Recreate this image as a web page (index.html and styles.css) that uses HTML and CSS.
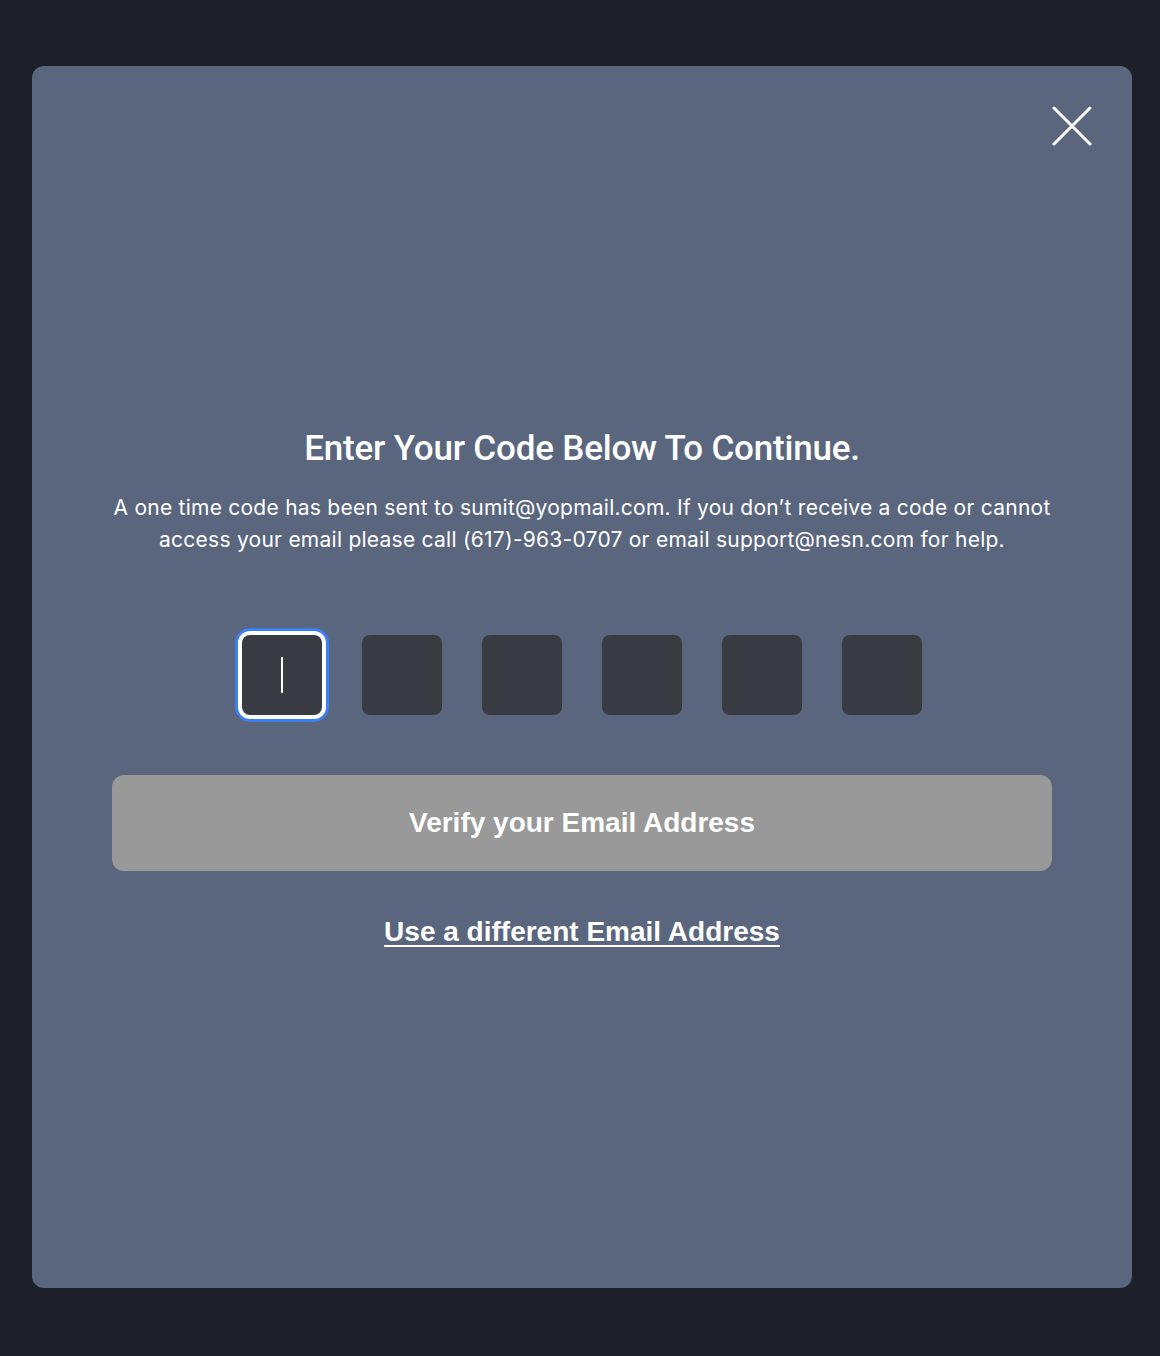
FILE: index.html
```html
<!DOCTYPE html>
<html lang="en">
<head>
<meta charset="utf-8">
<title>Verify Email</title>
<link rel="stylesheet" href="styles.css">
</head>
<body>
<div class="overlay">
  <div class="modal">
    <button class="close" aria-label="Close">
      <svg width="40" height="40" viewBox="0 0 40 40"><path d="M2 2 L38 38 M38 2 L2 38" stroke="#fff" stroke-width="3" stroke-linecap="round" fill="none"/></svg>
    </button>
    <div class="content">
      <h1 class="title">Enter Your Code Below To Continue.</h1>
      <p class="desc">A one time code has been sent to sumit@yopmail.com. If you don’t receive a code or cannot access your email please call (617)-963-0707 or email support@nesn.com for help.</p>
      <div class="codes">
        <div class="code focused"><span class="caret"></span></div>
        <div class="code"></div>
        <div class="code"></div>
        <div class="code"></div>
        <div class="code"></div>
        <div class="code"></div>
      </div>
      <button class="verify">Verify your Email Address</button>
      <a class="different" href="#">Use a different Email Address</a>
    </div>
  </div>
</div>
</body>
</html>
```

FILE: styles.css
```css
html, body {
  margin: 0;
  padding: 0;
  background: #1e2029;
}
.overlay {
  width: 1160px;
  height: 1356px;
  padding: 66px 28px 68px 32px;
  box-sizing: border-box;
}
.modal {
  position: relative;
  width: 1100px;
  height: 1222px;
  background: #5a667d;
  border-radius: 12px;
  box-sizing: border-box;
  padding: 0 80px;
}
.close {
  position: absolute;
  top: 40px;
  right: 40px;
  width: 40px;
  height: 40px;
  padding: 0;
  border: 0;
  background: none;
  cursor: pointer;
}
.close svg { display: block; }
.content {
  display: flex;
  flex-direction: column;
  align-items: center;
  padding-top: 363px;
}
.title {
  margin: 0;
  font-family: Roboto, "Noto Sans", sans-serif;
  font-weight: 500;
  font-size: 35px;
  line-height: 40px;
  color: #fff;
  letter-spacing: -0.2px;
}
.desc {
  margin: 23px 0 0;
  font-family: Inter, Roboto, sans-serif;
  font-weight: 400;
  font-size: 21px;
  line-height: 32px;
  color: #fff;
  text-align: center;
  letter-spacing: 0.25px;
}
.codes {
  display: flex;
  gap: 40px;
  margin-top: 79px;
}
.code {
  width: 80px;
  height: 80px;
  background: #393b43;
  border-radius: 8px;
  display: flex;
  align-items: center;
  justify-content: center;
}
.code.focused {
  box-shadow: 0 0 0 4px #fff, 0 0 0 7px #3b7ff0;
}
.caret {
  width: 2px;
  height: 36px;
  background: #fff;
}
.verify {
  margin-top: 60px;
  width: 940px;
  height: 96px;
  border: 0;
  border-radius: 12px;
  background: #999999;
  color: #fff;
  font-family: "Liberation Sans", Arial, sans-serif;
  font-weight: 700;
  font-size: 28px;
  cursor: pointer;
}
.different {
  margin-top: 45px;
  font-family: "Liberation Sans", Arial, sans-serif;
  font-weight: 700;
  font-size: 28px;
  line-height: 32px;
  color: #fff;
  text-decoration: underline;
  text-decoration-thickness: 2px;
  text-underline-offset: 4px;
}
```
